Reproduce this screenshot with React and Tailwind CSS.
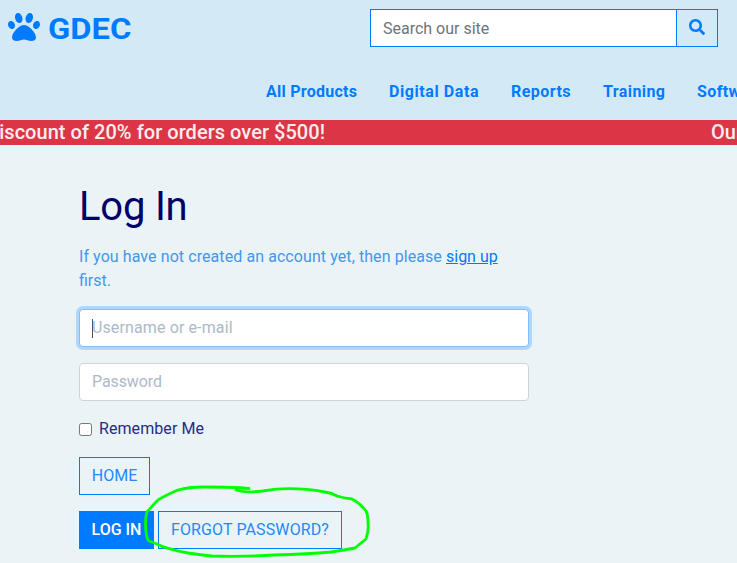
import { FaPaw, FaSearch } from "react-icons/fa";

const navItems = [
  { label: "All Products", style: "w-[91px] tracking-[0.25px]" },
  { label: "Digital Data", style: "w-[90px] tracking-[0.58px]" },
  { label: "Reports", style: "w-[60px] tracking-[0.45px]" },
  { label: "Training", style: "w-[62px] tracking-[0.4px]" },
  { label: "Software", style: "w-[70px] tracking-[0.4px]" },
];

function Header() {
  return (
    <header className="flex h-[120px] flex-col bg-[#d4e9f6] text-[#007bff]">
      <div className="flex h-[56px] shrink-0 items-start justify-between pl-2 pr-[19px] pt-[9px]">
        <a href="#" className="flex h-[38px] items-center gap-2">
          <FaPaw className="mt-[-2px] size-8" />
          <span className="mt-px origin-left scale-x-[1.09] text-[30px] font-bold leading-none">GDEC</span>
        </a>
        <form className="flex h-[38px] w-[348px] border border-[#007bff]">
          <input
            className="min-w-0 flex-1 bg-white px-3 pt-0.5 text-base tracking-[0px] text-[#495057] outline-none placeholder:text-[#6c757d]"
            placeholder="Search our site"
          />
          <button
            type="button"
            aria-label="Search"
            className="flex w-[41px] items-center justify-center border-l border-[#007bff]"
          >
            <FaSearch className="mt-[-2px] size-4" />
          </button>
        </form>
      </div>
      <nav className="mt-[24px] flex h-6 gap-8 pl-[266px] text-base font-bold leading-6">
        {navItems.map((item) => (
          <a key={item.label} href="#" className={`shrink-0 whitespace-nowrap ${item.style}`}>
            {item.label}
          </a>
        ))}
      </nav>
    </header>
  );
}

function Banner() {
  return (
    <div className="flex h-[25px] justify-between whitespace-nowrap bg-[#dc3545] text-xl font-medium leading-[25px] text-[#fbecee]">
      <div className="flex w-[325px] justify-end tracking-[0.04px]">Discount of 20% for orders over $500!</div>
      <div className="w-[26px]">Our newest offers</div>
    </div>
  );
}

function LoginForm() {
  return (
    <main className="relative ml-[79px] w-[450px] pt-[38px]">
      <h1 className="text-[40px] leading-[48px] tracking-[-0.2px] text-[#000069]">Log In</h1>
      <p className="mt-[14px] text-base leading-6 text-[#4596ec]">
        <span className="tracking-[0.08px]">If you have not created an account yet, then please </span>
        <a href="#" className="text-[#007bff] underline">sign up</a>
        <br />
        first.
      </p>
      <div className="mt-4 flex h-[38px] items-center rounded-[4px] border border-[#80bdff] bg-white px-3 text-base text-[#adb9c8] shadow-[0_0_0_3px_#b0d6fa]">
        <span className="-mr-px h-[19px] w-px shrink-0 bg-[#495057]" />
        <span className="tracking-[0.12px]">Username or e-mail</span>
      </div>
      <div className="mt-4 flex h-[38px] items-center rounded-[4px] border border-[#ced4da] bg-white px-3 text-base text-[#adb9c8]">
        <span className="tracking-[-0.1px]">Password</span>
      </div>
      <label className="mt-4 flex h-6 items-center text-base text-[#292985]">
        <input
          type="checkbox"
          className="mr-[7px] size-[13px] appearance-none rounded-[2.5px] border border-[#767676] bg-white"
        />
        <span className="tracking-[0.08px]">Remember Me</span>
      </label>
      <div className="mt-4 flex">
        <button type="button" className="flex h-[38px] w-[71px] items-center justify-center border border-[#007bff] text-base text-[#2389fb]">
          HOME
        </button>
      </div>
      <div className="mt-4 flex gap-1">
        <button type="button" className="flex h-[38px] w-[75px] items-center justify-center whitespace-nowrap bg-[#007bff] text-base font-medium text-white">
          LOG IN
        </button>
        <button type="button" className="flex h-[38px] w-[184px] items-center justify-center whitespace-nowrap border border-[#007bff] text-base tracking-[0.12px] text-[#2389fb]">
          FORGOT PASSWORD?
        </button>
      </div>
      <svg
        className="pointer-events-none absolute left-[65px] top-[335px]"
        width="230"
        height="83"
        viewBox="144 480 230 83"
        fill="none"
        stroke="#00ff00"
        strokeWidth="2.8"
        strokeLinecap="round"
        strokeLinejoin="round"
      >
        <path d="M249 488.5 C236 487 212 487 203 487 Q189 487 178 490 Q166 495 158 500 Q153 505 147 512 Q144 522 147 538 L149 541 L157 544 Q166 549 188 553 Q201 555 212 556 Q242 557 274 555 Q309 554 331 552 Q344 550 355 548 Q361 543 366 539 Q369 530 368 523 Q368 515 366 511 Q360 503 352 499 Q343 498 337 496 Q332 493 325 492 C308 489 285 487 263 491 Q245 493 236 490" />
      </svg>
    </main>
  );
}

export default function App() {
  return (
    <div className="h-[563px] w-[737px] overflow-hidden bg-[#eaf4f7] font-['Roboto','Liberation_Sans',sans-serif]">
      <Header />
      <Banner />
      <LoginForm />
    </div>
  );
}
